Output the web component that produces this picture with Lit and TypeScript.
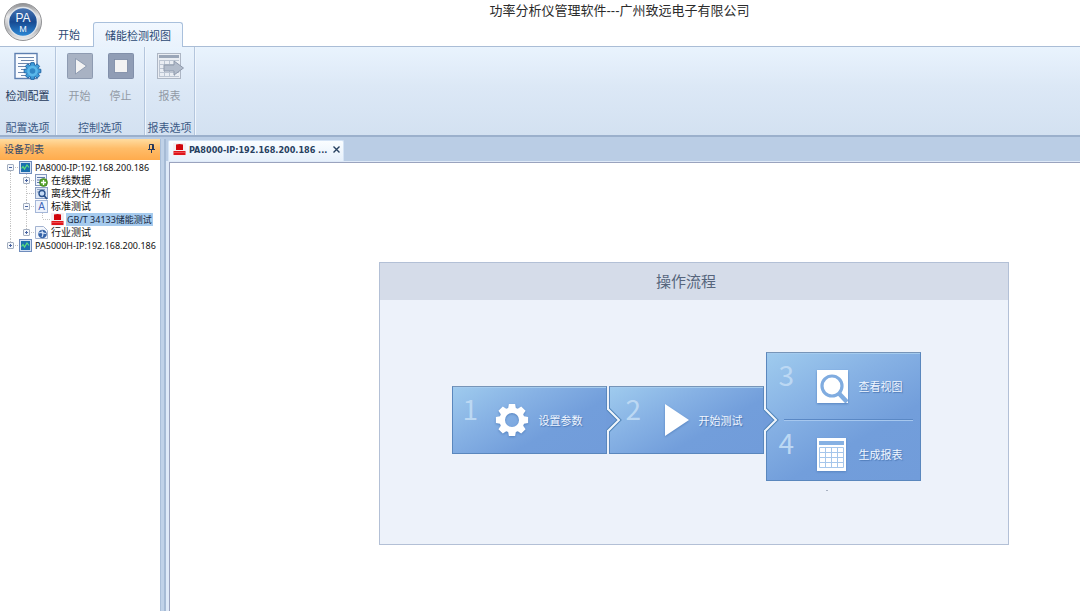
import { LitElement, html, css, svg, nothing } from "lit";
import { customElement, property, state } from "lit/decorators.js";
import { classMap } from "lit/directives/class-map.js";

const gearPath = (teeth: number, outer: number, inner: number, half: number, c: number) => {
  const pts: string[] = [];
  for (let i = 0; i < teeth; i++) {
    const a = (i * 2 * Math.PI) / teeth;
    const w = half / inner;
    const v = (half * 0.8) / outer;
    for (const [r, d] of [[inner, -w], [outer, -v], [outer, v], [inner, w]]) {
      pts.push(`${(c + r * Math.sin(a + d)).toFixed(2)} ${(c - r * Math.cos(a + d)).toFixed(2)}`);
    }
  }
  return `M${pts.join("L")}Z`;
};

const icons: Record<string, unknown> = {
  config: html`<svg width="28" height="28" viewBox="0 0 28 28">
    <rect x="1" y="1.5" width="22" height="25" fill="#fafcff" stroke="#5d7fb0" stroke-width="1.4" />
    <path d="M4 5.5h16M7 8.500h13M4 11.500h13M4 14.500h10M7 17.500h6M4 20.500h7M7 23.500h5" stroke="#6d87ad" stroke-width="1.2" />
    <g transform="translate(10 10.500)">
      <path d=${gearPath(8, 8.5, 6.3, 2.1, 8.5)} fill="#3e9bd8" stroke="#2268a8" stroke-width="1" />
      <circle cx="8.500" cy="8.500" r="5.300" fill="#5ab8ea" />
      <circle cx="8.500" cy="8.500" r="2.800" fill="#2f86c5" />
    </g>
  </svg>`,
  start: html`<svg width="28" height="28" viewBox="0 0 28 28">
    <rect x="1.500" y="1.500" width="25" height="25" rx="1" fill="#a8b2c3" stroke="#8e9bb1" />
    <path d="M9.500 6.500l11 7.500-11 8z" fill="#f3f3f3" stroke="#8190a8" stroke-width=".8" />
  </svg>`,
  stop: html`<svg width="28" height="28" viewBox="0 0 28 28">
    <rect x="1.500" y="1.500" width="25" height="25" rx="1" fill="#909db5" stroke="#8290aa" />
    <rect x="7.500" y="7.500" width="13" height="13" fill="#f3f3f3" stroke="#7b89a3" stroke-width=".8" />
  </svg>`,
  report: html`<svg width="28" height="28" viewBox="0 0 28 28">
    <rect x="1.500" y="1.500" width="23" height="25" fill="#e9edf3" stroke="#adb6c4" />
    <rect x="3" y="3" width="20" height="3" fill="#9aa6b8" />
    <path d="M3.500 8v17M8.500 8v17M13.500 8v17M18.500 8v17M3 8.500h20M3 12.500h20M3 16.500h20M3 20.500h20M3 24.500h20" stroke="#bcc5d2" />
    <path d="M8 13h10V9l9.500 7-9.500 7v-4H8z" fill="#b2bccb" stroke="#8f9aac" />
  </svg>`,
  device: html`<svg width="13" height="13" viewBox="0 0 13 13">
    <rect x=".5" y=".5" width="12" height="12" fill="#d3e0f3" stroke="#6f8cbc" />
    <rect x="2" y="2" width="9" height="9" fill="#1b6fae" />
    <path d="M2.500 7.500l1.500-2 1.500 2.500 2.500-4 2 2.500" fill="none" stroke="#5ce07c" stroke-width="1.200" />
  </svg>`,
  online: html`<svg width="13" height="13" viewBox="0 0 13 13">
    <rect x=".5" y=".5" width="11" height="11" fill="#eef3fb" stroke="#8297bd" />
    <path d="M2 3.500h8M2 6h4M2 8.500h3" stroke="#5f79a8" />
    <circle cx="8.500" cy="8.500" r="4" fill="#57a52c" stroke="#35751a" stroke-width=".6" />
    <path d="M6 8.500h5M8.500 6v5" stroke="#fff" stroke-width="1.300" />
  </svg>`,
  offline: html`<svg width="13" height="13" viewBox="0 0 13 13">
    <rect x=".5" y=".5" width="12" height="11" fill="#dce6f5" stroke="#8ca0c4" />
    <path d="M2 2.500h8M2 5h2" stroke="#90a3c4" />
    <circle cx="7" cy="6.500" r="3" fill="#c6dbf5" stroke="#29518c" stroke-width="1.400" />
    <path d="M9 8.500l3 3.500" stroke="#29518c" stroke-width="1.800" />
  </svg>`,
  standard: html`<svg width="13" height="13" viewBox="0 0 13 13">
    <rect x=".5" y=".5" width="12" height="12" fill="#eef3fc" stroke="#a5b7d8" />
    <text x="6.500" y="10" text-anchor="middle" font-family="Liberation Sans, sans-serif" font-size="10" fill="#3f65ba">A</text>
  </svg>`,
  battery: html`<svg width="13" height="13" viewBox="0 0 13 13">
    <rect width="13" height="13" fill="#f4eef1" />
    <path d="M3 1.500q3.500-1 7 0V7H3z" fill="#d0040b" />
    <path d="M.5 8h12v4H.500z" fill="#e0161c" />
    <path d="M1 9.500h11" stroke="#ea4a4d" />
  </svg>`,
  industry: html`<svg width="13" height="13" viewBox="0 0 13 13">
    <path d="M.5.5h8l4 4v8H.500z" fill="#f4f7fc" stroke="#a3b3d0" />
    <circle cx="7.500" cy="8" r="4.300" fill="#3563a8" />
    <path d="M3.500 7q3-1 4 0t-.5 4M7 4.500q0 3 4 3" stroke="#d4e3f8" stroke-width="1.200" fill="none" />
  </svg>`,
  gear: html`<svg width="34" height="34" viewBox="0 0 34 34">
    <path fill-rule="evenodd" d="${gearPath(8, 16.4, 12.6, 3.9, 17)}M17 10a7 7 0 1 0 0 14a7 7 0 1 0 0-14Z" fill="#fff" />
  </svg>`,
  play: html`<svg width="24" height="34" viewBox="0 0 24 34">
    <path d="M0 1l24 16L0 33z" fill="#fff" />
  </svg>`,
  search: html`<svg width="31" height="33" viewBox="0 0 31 33">
    <rect width="31" height="33" fill="#fff" />
    <circle cx="15" cy="16" r="10" fill="none" stroke="#80ace0" stroke-width="3.200" />
    <path d="M22 23.500l8 8.500" stroke="#80ace0" stroke-width="4.500" />
  </svg>`,
  table: html`<svg width="31" height="33" viewBox="0 0 31 33">
    <rect width="29" height="33" fill="#fff" />
    <rect x="2" y="3" width="25" height="4" fill="#86b1e3" />
    <path d="M2.500 9.500h24v20h-24zM8.500 9v21M14.500 9v21M20.500 9v21M2 14.500h25M2 19.500h25M2 24.500h25" fill="none" stroke="#a5c6eb" />
  </svg>`,
};

const logo = html`<svg class="logo" width="40" height="40" viewBox="0 0 40 40" role="img" aria-label="PAM">
  <defs>
    <linearGradient id="ring" x1="0" y1="0" x2="0" y2="1">
      <stop offset="0" stop-color="#8f9093" /><stop offset=".35" stop-color="#e9e9ea" />
      <stop offset=".7" stop-color="#b4b5b8" /><stop offset="1" stop-color="#f1f1f1" />
    </linearGradient>
    <linearGradient id="ball" x1="0" y1="0" x2="0" y2="1">
      <stop offset="0" stop-color="#4874b2" /><stop offset=".5" stop-color="#174a92" /><stop offset="1" stop-color="#2d8bd8" />
    </linearGradient>
  </defs>
  <circle cx="20" cy="20" r="18.500" fill="url(#ring)" stroke="#929396" />
  <circle cx="20" cy="20" r="14.500" fill="url(#ball)" stroke="#dfe4ea" stroke-width="1.500" />
  <text x="20" y="20" text-anchor="middle" font-family="Liberation Sans, sans-serif" font-size="12" fill="#f4f8ff">PA</text>
  <text x="20" y="30" text-anchor="middle" font-family="Liberation Sans, sans-serif" font-size="9" fill="#f4f8ff">M</text>
</svg>`;

const pin = html`<svg width="7" height="9" viewBox="0 0 7 9">
  <path d="M1.500 5V.500h4V5M0 5.500h7M3.500 6v3M4.500 1v4" fill="none" stroke="#27395c" />
</svg>`;

const cross = html`<svg width="7" height="7" viewBox="0 0 7 7">
  <path d="M.5.5l6 6M6.500.5l-6 6" stroke="#27405f" stroke-width="1.400" />
</svg>`;

type Guide = "line" | "tee" | "end" | "plus" | "minus" | "first" | "last";
interface Node { guides: Guide[]; icon: string; label: string; level: number }

@customElement("device-tree")
class DeviceTree extends LitElement {
  @state() private selected = 4;

  private nodes: Node[] = [
    { level: 1, guides: ["first"], icon: "device", label: "PA8000-IP:192.168.200.186" },
    { level: 2, guides: ["line", "plus"], icon: "online", label: "在线数据" },
    { level: 2, guides: ["line", "tee"], icon: "offline", label: "离线文件分析" },
    { level: 2, guides: ["line", "minus"], icon: "standard", label: "标准测试" },
    { level: 3, guides: ["line", "line", "end"], icon: "battery", label: "GB/T 34133储能测试" },
    { level: 2, guides: ["line", "last"], icon: "industry", label: "行业测试" },
    { level: 1, guides: ["last"], icon: "device", label: "PA5000H-IP:192.168.200.186" },
  ];

  static styles = css`
    .tree { margin: 0; padding: 1px 0 0 3px; list-style: none; }
    .row {
      display: flex; align-items: center; height: 13px; padding: 0; border: 0; background: none;
      font: 9px/13px "Noto Sans", "Noto Sans CJK SC", sans-serif; color: #111; white-space: nowrap;
    }
    .cjk { font-size: 10px; }
    .label { margin-left: 2px; padding: 0 1px; }
    .selected { background: #a6cbee; color: #16273f; }
    svg { display: block; }
  `;

  private guide(g: Guide) {
    const up = g !== "first";
    const down = ["line", "tee", "plus", "minus", "first"].includes(g);
    const box = ["plus", "minus", "first", "last"].includes(g);
    const plus = g === "plus" || g === "last";
    return html`<svg width="16" height="13" viewBox="0 0 16 13">
      <g stroke="#c4c4c4" stroke-dasharray="1 1">
        ${up ? svg`<path d="M7.500 0v6" />` : nothing}
        ${down ? svg`<path d="M7.500 6v7" />` : nothing}
        ${g !== "line" ? svg`<path d="M8 6.500h8" />` : nothing}
      </g>
      ${box ? svg`<rect x="4.500" y="3.500" width="6" height="6" rx=".5" fill="#f5f8fc" stroke="#a3aebf" /><path d="M6 6.500h3" stroke="#4a64a0" />` : nothing}
      ${plus ? svg`<path d="M7.500 5v3" stroke="#4a64a0" />` : nothing}
    </svg>`;
  }

  render() {
    return html`<ul class="tree" role="tree" aria-label="设备列表">
      ${this.nodes.map((n, i) => html`<li role="none">
        <button class=${classMap({ row: true, cjk: !/[A-Z]/.test(n.label) })} role="treeitem"
          aria-level=${n.level} aria-selected=${i === this.selected} @click=${() => (this.selected = i)}>
          ${n.guides.map((g) => this.guide(g))}${icons[n.icon]}
          <span class=${classMap({ label: true, selected: i === this.selected })}>${n.label}</span>
        </button>
      </li>`)}
    </ul>`;
  }
}

@customElement("flow-step")
class FlowStep extends LitElement {
  @property() number = "";
  @property() icon = "";
  @property() label = "";

  static styles = css`
    :host { display: block; }
    .step {
      display: flex; align-items: center; gap: var(--step-gap, 10px); box-sizing: border-box;
      width: 100%; height: 64px; padding: 0 var(--step-end, 20px) 0 var(--step-start, 10px);
      border: 0; background: none; text-align: left;
      font: 11px/16px "Noto Sans CJK SC", sans-serif; color: #f0f6ff; cursor: pointer;
    }
    .number { align-self: flex-start; flex: 1; font: 28px/40px "Noto Sans CJK SC", "Noto Sans", sans-serif; color: #bcd8f3; }
    .label { text-shadow: 1px 1px 1px #4a76b3; }
    svg { display: block; filter: drop-shadow(0 1px 1px #5784c0); }
  `;

  render() {
    return html`<button class="step">
      <span class="number">${this.number}</span>
      ${icons[this.icon]}
      <span class="label">${this.label}</span>
    </button>`;
  }
}

@customElement("app-root")
class AppRoot extends LitElement {
  static styles = css`
    :host {
      display: flex; flex-direction: column; min-height: 100vh; background: #fff;
      font: 11px/16px "Noto Sans CJK SC", sans-serif; color: #1e395b;
    }
    button { font: inherit; color: inherit; border: 0; padding: 0; background: none; }
    svg { display: block; }

    .titlebar { display: grid; grid-template-columns: 1fr auto 1fr; height: 46px; box-sizing: border-box; }
    .title { margin: 0; padding: 2px 0 0 159px; font: 13px/18px "Liberation Sans", "Noto Sans CJK SC", sans-serif; color: #2b2b2b; }
    .left { display: flex; align-items: flex-end; width: 183px; }
    .logo { align-self: flex-start; margin: 2px 12px 0 3px; }
    .tabs { display: flex; align-items: flex-end; }
    .tab { height: 24px; width: 38px; padding-right: 10px; white-space: nowrap; color: #2c4a74; }
    .tab.active {
      width: 90px; height: 25px; padding: 0; border: 1px solid #a9c0dc; border-bottom: 0; border-radius: 3px 3px 0 0;
      background: linear-gradient(#f2f8ff, #e9f2fc); position: relative; bottom: -1px;
    }

    .ribbon {
      display: flex; height: 88px; border-top: 1px solid #aabdd6; border-bottom: 2px solid #9bb0cc;
      background: linear-gradient(#e9f3fd, #dce8f6 45%, #d3e1f1);
    }
    .group {
      display: flex; flex-direction: column; justify-content: space-between; box-sizing: border-box;
      border-right: 1px solid #b4c6dd; box-shadow: 1px 0 #f0f6fd; padding: 5px 3px 0; text-align: center;
    }
    .tools { display: flex; justify-content: center; }
    .tool { display: flex; flex-direction: column; align-items: center; gap: 7px; width: 41px; white-space: nowrap; }
    .tool.wide { width: 48px; }
    .tool:disabled { color: #929aa5; }
    .caption { color: #3c5a86; }
    .group.config { width: 56px; } .group.control { width: 89px; } .group.output { width: 50px; padding: 5px 0 0; }

    .workspace { display: flex; flex: 1; padding-top: 2px; background: #bacde5; }
    .sidebar { width: 160px; border-right: 1px solid #aabfd9; background: #fff; display: flex; flex-direction: column; }
    .sidehead {
      display: flex; align-items: center; justify-content: space-between; height: 21px; padding: 0 5px 2px 4px; box-sizing: border-box;
      background: linear-gradient(#ffdca0, #ffbd69 45%, #ffab4d); font-size: 10px;
    }
    .sidehead h2 { margin: 0; font: inherit; color: #33496d; }
    .splitter { width: 3px; background: #c0d2e8; border-right: 2px solid #a6bbd5; }
    .documents { flex: 1; display: flex; flex-direction: column; min-width: 0; }
    .doctabs { display: flex; height: 22px; padding: 1px 0 0 2px; box-sizing: border-box; }
    .doctab {
      display: flex; align-items: center; width: 176px; box-sizing: border-box; padding: 0 3px 3px 4px;
      background: linear-gradient(#fafdff, #e6f0fb); border: 1px solid #d4e3f5; border-bottom: 0; border-radius: 2px 2px 0 0;
      font: bold 9px/16px "DejaVu Sans Condensed", "DejaVu Sans", sans-serif; color: #27405f; white-space: nowrap;
    }
    .doctab span { flex: 1; margin-left: 3px; }
    .page {
      flex: 1; background: #fff; border: 3px solid #dfeaf8; border-right: 0; border-bottom: 0; border-top-width: 1px;
      display: flex; align-items: flex-start;
    }
    .sheet {
      flex: 1; align-self: stretch; border: 1px solid #9aa3be; border-right: 0; border-bottom: 0; padding: 99px 71px 20px 209px;
    }
    .panel { border: 1px solid #b3c0d6; background: #edf2fa; }
    .panel h1 {
      margin: 0; padding: 0 16px 1px 0; background: #d5dce9; text-align: center;
      font: 15px/36px "Noto Sans CJK SC", sans-serif; color: #56657c;
    }
    .flow { display: flex; justify-content: center; align-items: flex-start; gap: 2px; padding: 52px 16px 53px 0; }
    .card {
      position: relative; width: 155px; box-sizing: border-box; border: 1px solid #5a87bd; border-top-color: #7795b8;
      box-shadow: inset 0 1px #a4cbee; padding: 1px 0;
      background: linear-gradient(150deg, #9fcbee, #86b1e4 35%, #729edb 65%, #719cda);
    }
    .single { margin-top: 34px; }
    .first { --step-end: 23px; }
    .second { --step-start: 16px; }
    .tall { --step-start: 12px; --step-end: 17px; --step-gap: 11px; height: 129px; }
    .arrow { position: absolute; left: -4px; top: 19px; }
    .tall .arrow { top: 53px; }
    .rule { height: 1px; margin: 1px 7px 1px 17px; border: 0; background: #5a88c5; border-bottom: 1px solid #a6c7ee; }
    .mark { width: 2px; height: 1px; margin: 9px 0 0 60px; background: #a9b2c2; }
  `;

  private arrow() {
    return html`<svg class="arrow" width="18" height="28" viewBox="0 0 18 28" aria-hidden="true">
      <path d="M0 0v3.500L12 14 0 24.500V28z" fill="#719cda" />
      <path d="M2 3L13 14 2 25" fill="none" stroke="#4f83b8" stroke-width="4" />
      <path d="M2 0v3L13 14 2 25v3" fill="none" stroke="#f1f6fc" stroke-width="2" />
    </svg>`;
  }

  render() {
    return html`
      <header class="titlebar">
        <div class="left">
          ${logo}
          <nav class="tabs" role="tablist">
            <button class="tab" role="tab" aria-selected="false">开始</button>
            <button class="tab active" role="tab" aria-selected="true">储能检测视图</button>
          </nav>
        </div>
        <p class="title">功率分析仪管理软件---广州致远电子有限公司</p>
      </header>

      <section class="ribbon" aria-label="储能检测视图">
        <div class="group config">
          <div class="tools"><button class="tool wide">${icons.config}检测配置</button></div>
          <span class="caption">配置选项</span>
        </div>
        <div class="group control">
          <div class="tools">
            <button class="tool" disabled>${icons.start}开始</button>
            <button class="tool" disabled>${icons.stop}停止</button>
          </div>
          <span class="caption">控制选项</span>
        </div>
        <div class="group output">
          <div class="tools"><button class="tool" disabled>${icons.report}报表</button></div>
          <span class="caption">报表选项</span>
        </div>
      </section>

      <div class="workspace">
        <aside class="sidebar">
          <div class="sidehead"><h2>设备列表</h2><button aria-label="固定">${pin}</button></div>
          <device-tree></device-tree>
        </aside>
        <div class="splitter"></div>
        <main class="documents">
          <div class="doctabs">
            <div class="doctab">${icons.battery}<span>PA8000-IP:192.168.200.186 ...</span><button aria-label="关闭">${cross}</button></div>
          </div>
          <div class="page">
            <div class="sheet">
              <section class="panel">
                <h1>操作流程</h1>
                <div class="flow">
                  <div class="card single first"><flow-step number="1" icon="gear" label="设置参数"></flow-step></div>
                  <div class="card single second">${this.arrow()}<flow-step number="2" icon="play" label="开始测试"></flow-step></div>
                  <div>
                    <div class="card tall">
                      ${this.arrow()}
                      <flow-step number="3" icon="search" label="查看视图"></flow-step>
                      <hr class="rule" />
                      <flow-step number="4" icon="table" label="生成报表"></flow-step>
                    </div>
                    <div class="mark"></div>
                  </div>
                </div>
              </section>
            </div>
          </div>
        </main>
      </div>
    `;
  }
}
